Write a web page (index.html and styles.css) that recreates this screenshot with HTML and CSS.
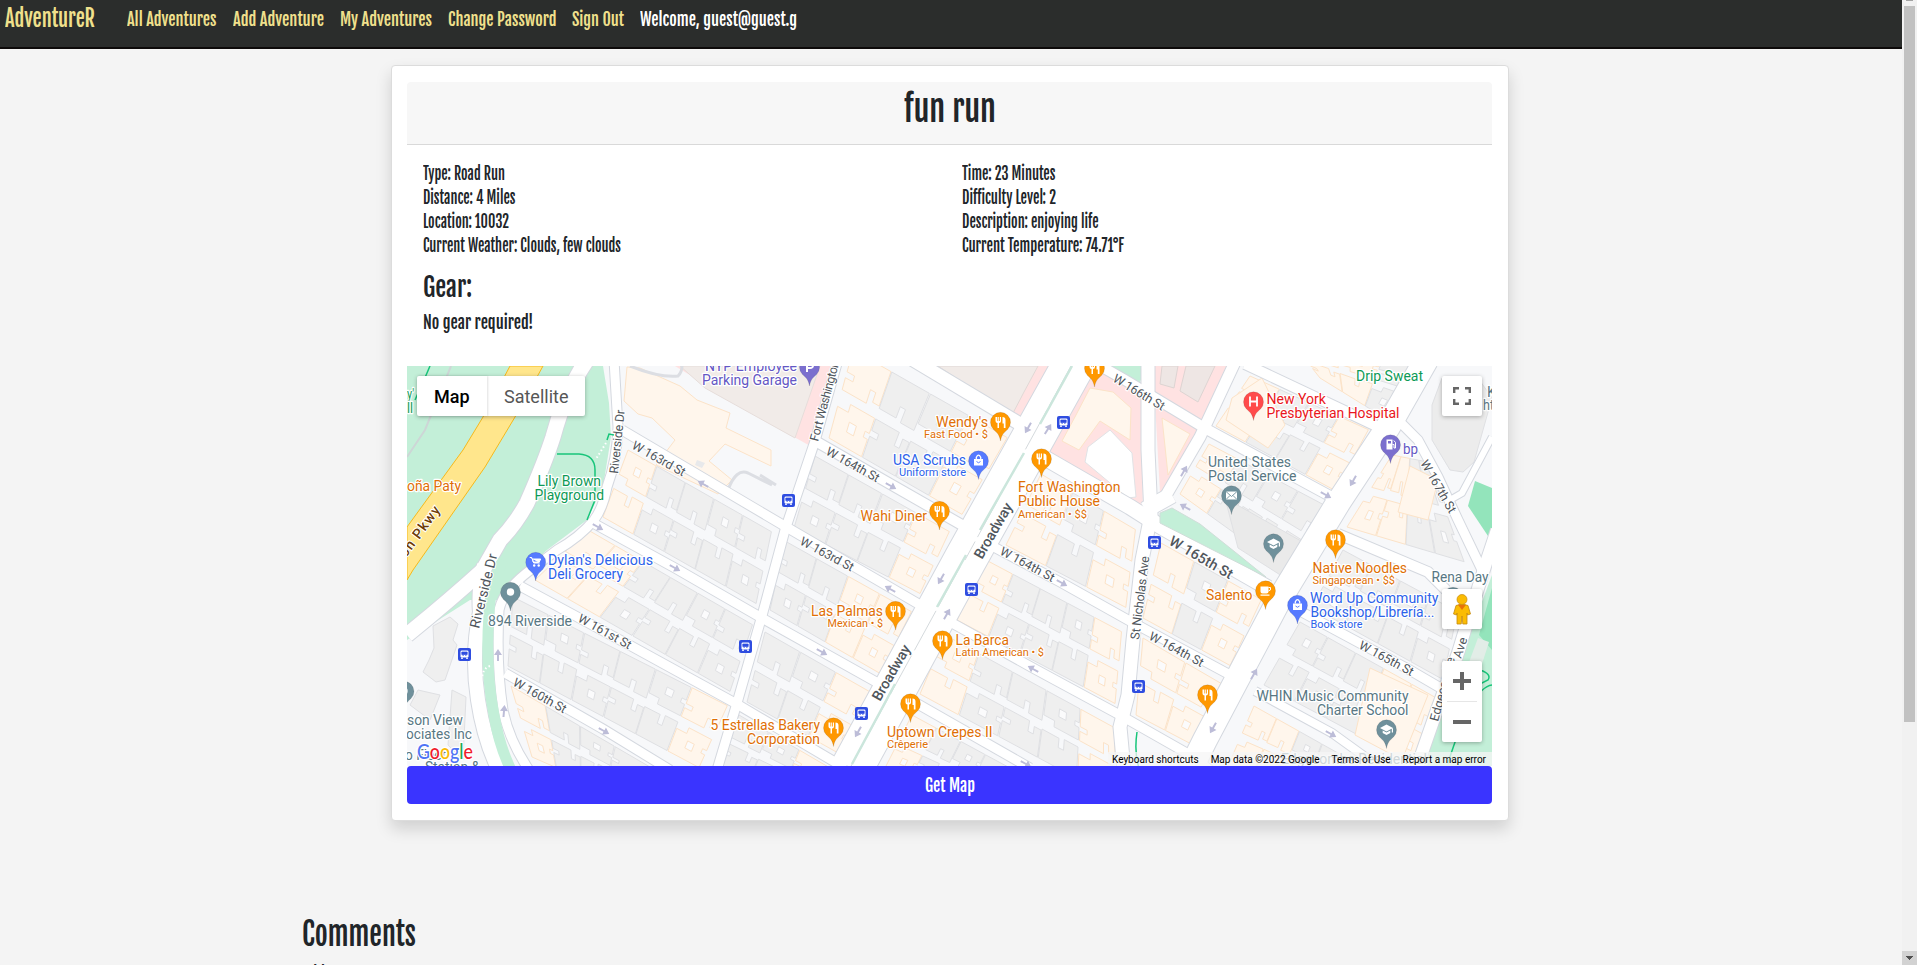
FILE: index.html
```html
<!DOCTYPE html>
<html lang="en">
<head>
<meta charset="utf-8">
<title>AdventureR</title>
<link rel="stylesheet" href="styles.css">
</head>
<body>
<div class="page">
  <nav class="navbar">
    <a class="brand fit" data-w="90">AdventureR</a>
    <div class="links">
      <a class="fit" data-w="89.500">All Adventures</a>
      <a class="fit" data-w="91">Add Adventure</a>
      <a class="fit" data-w="92">My Adventures</a>
      <a class="fit" data-w="108.500">Change Password</a>
      <a class="fit" data-w="52">Sign Out</a>
      <span class="fit welcome" data-w="157">Welcome, guest@guest.g</span>
    </div>
  </nav>
  <main>
    <section class="card">
      <header class="card-header"><h2 class="fit" data-w="92">fun run</h2></header>
      <div class="details">
        <div class="column">
          <p><span class="fit" data-w="82">Type: Road Run</span></p>
          <p><span class="fit" data-w="92.500">Distance: 4 Miles</span></p>
          <p><span class="fit" data-w="86">Location: 10032</span></p>
          <p><span class="fit" data-w="198">Current Weather: Clouds, few clouds</span></p>
        </div>
        <div class="column">
          <p><span class="fit" data-w="93.500">Time: 23 Minutes</span></p>
          <p><span class="fit" data-w="94">Difficulty Level: 2</span></p>
          <p><span class="fit" data-w="136.500">Description: enjoying life</span></p>
          <p><span class="fit" data-w="162">Current Temperature: 74.71°F</span></p>
        </div>
      </div>
      <div class="gear">
        <h3><span class="fit" data-w="49">Gear:</span></h3>
        <p><span class="fit" data-w="110.500">No gear required!</span></p>
      </div>
      <div class="map">
        <svg class="canvas" id="map" viewBox="407 366 1085 400" width="1085" height="400"></svg>
        <div class="map-type"><b>Map</b><span>Satellite</span></div>
        <div class="control fullscreen">
          <svg width="18" height="18" viewBox="0 0 18 18"><path d="M0 6V0h6v2.400H2.400V6zM12 0h6v6h-2.400V2.400H12zM0 12h2.400v3.600H6V18H0zM15.600 12H18v6h-6v-2.400h3.600z" fill="#666"/></svg>
        </div>
        <div class="control pegman">
          <svg width="18" height="31" viewBox="0 0 18 31"><path d="M3 11.500Q9 8.500 15 11.500L17.500 20l-3 1-.5-2V30H9.800L9 22l-.8 8H4V19l-.5 2-3-1z" fill="#fbbc04" stroke="#c58a10" stroke-width=".8"/><path d="M5 10.800h8L9 16z" fill="#e8710a"/><circle cx="9" cy="5.500" r="5" fill="#fbbc04" stroke="#c58a10" stroke-width=".7"/></svg>
        </div>
        <div class="zoom">
          <svg width="40" height="40" viewBox="0 0 40 40"><path d="M18 11h4v7h7v4h-7v7h-4v-7h-7v-4h7z" fill="#666"/></svg>
          <hr>
          <svg width="40" height="40" viewBox="0 0 40 40"><path d="M11 18h18v4H11z" fill="#666"/></svg>
        </div>
        <div class="attribution"><span>Keyboard shortcuts</span><span>Map data ©2022 Google</span><span>Terms of Use</span><span>Report a map error</span></div>
      </div>
      <button class="get-map"><span class="fit" data-w="50">Get Map</span></button>
    </section>
    <section class="comments">
      <h2><span class="fit" data-w="114">Comments</span></h2>
      <p><span class="fit" data-w="95">Add a comment</span></p>
    </section>
  </main>
  <div class="scrollbar"><i class="up"></i><i class="thumb"></i><i class="down"><svg width="7" height="4" viewBox="0 0 7 4"><path d="M0 0h7v1H6v1H5v1H4v1H3V3H2V2H1V1H0z" fill="#505050"/></svg></i></div>
</div>
<script src="script.js"></script>
</body>
</html>
```
FILE: styles.css
```css
* { box-sizing: border-box; }
body { margin: 0; overflow: hidden; background: #f4f4f4; color: #212529; font-family: "Fjalla One", Roboto, sans-serif; font-weight: 500; }
h2, h3, p { margin: 0; font-weight: 500; }
.page { position: relative; height: 965px; overflow: hidden; padding-right: 15px; }
.fit { display: inline-block; white-space: nowrap; }
.fit > span { display: inline-block; transform-origin: 0 50%; }
.navbar { display: flex; height: 49px; padding-left: 5px; background: #2b2d2c; border-bottom: 2px solid #0d0a0a; color: #f0e08c; }
.brand { font-size: 24px; line-height: 36px; margin-right: 32px; }
.links { display: flex; gap: 16px; font-size: 18px; line-height: 39px; }
.welcome { color: #fff; }
.card { width: 1118px; height: 756px; margin: 16px 0 0 390.500px; padding: 16px 15.500px; background: #fff; border: 1px solid #dcdcdc; border-radius: 4px; box-shadow: 0 8px 16px rgba(0,0,0,.15); }
.card-header { height: 63px; text-align: center; background: #f7f7f7; border-bottom: 1px solid #d9d9d9; border-radius: 4px 4px 0 0; font-size: 36px; line-height: 54px; }
.card-header h2 { font-size: 34.500px; text-align: left; }
.details { display: grid; grid-template-columns: 538.500px 1fr; padding: 17px 0 0 16px; font-size: 17px; line-height: 24px; }
.column p { height: 24px; }
.gear { padding: 14px 0 32px 16px; }
.gear h3 { height: 30px; font-size: 26px; line-height: 30px; margin-bottom: 8px; }
.gear p { height: 24px; font-size: 18px; line-height: 24px; }
.map { position: relative; height: 400px; width: 1085px; overflow: hidden; font-family: Roboto, sans-serif; font-weight: 400; }
.canvas { display: block; }
.map-type { position: absolute; left: 10px; top: 10px; display: flex; height: 40px; background: #fff; border-radius: 2px; box-shadow: 0 1px 4px rgba(0,0,0,.3); font-size: 18px; line-height: 41px; color: #565656; }
.map-type b { width: 70px; padding-left: 17px; font-weight: 500; color: #000; box-shadow: 1px 0 2px rgba(0,0,0,.12); }
.map-type span { width: 98px; padding-left: 17px; }
.control, .zoom { position: absolute; right: 10px; width: 40px; background: #fff; border-radius: 2px; box-shadow: 0 1px 4px rgba(0,0,0,.3); }
.control { height: 40px; display: grid; place-items: center; }
.fullscreen { top: 10px; }
.pegman { top: 223px; }
.zoom { top: 295px; height: 81px; }
.zoom svg { display: block; }
.zoom hr { height: 1px; margin: 0 5px; border: 0; background: #e6e6e6; }
.attribution { position: absolute; right: 0; bottom: 0; display: flex; justify-content: space-between; width: 384px; height: 14px; padding: 0 6px 0 4px; background: rgba(245,245,245,.75); color: #000; font-size: 10px; line-height: 15px; }
.get-map { display: block; width: 1085px; height: 38px; padding: 0; border: 0; border-radius: 4px; background: #3a34ff; color: #fff; font: 500 18px/36px "Fjalla One", Roboto, sans-serif; }
.get-map .fit { text-align: left; }
.comments { padding: 94px 0 0 301.500px; }
.comments h2 { height: 38px; font-size: 31.500px; line-height: 38px; margin-bottom: 8px; }
.comments p { font-size: 18px; line-height: 24px; }
.scrollbar { position: absolute; right: 0; top: 0; width: 15px; height: 965px; background: #f1f1f1; }
.up { position: absolute; left: 4px; top: 0; width: 7px; height: 1px; background: #a3a3a3; }
.thumb { position: absolute; left: 2px; top: 6px; width: 11px; height: 716px; background: #c1c1c1; }
.down { position: absolute; left: 0; bottom: 0; width: 15px; height: 14px; display: grid; place-items: center; background: #d2d2d2; }
.label { paint-order: stroke; stroke: #fff; stroke-width: 2.500px; stroke-linejoin: round; font-size: 14px; }
.label.small { font-size: 11.500px; }
.street { paint-order: stroke; stroke: #fff; stroke-width: 2px; font-size: 12.500px; fill: #50565c; }
.street.major { font-size: 14.500px; font-weight: 500; }
.street.drive { font-size: 14px; }
.street.parkway { font-size: 14px; font-weight: 500; fill: #6d3b05; }
.logo { font: 500 21px Lato, sans-serif; paint-order: stroke; stroke: #fff; stroke-width: 2.500px; }
```
FILE: script.js
```js
// Squeeze headings and body text to the condensed widths of the site's type.
document.querySelectorAll('.fit').forEach(function (el) {
  var inner = document.createElement('span');
  inner.textContent = el.textContent;
  el.textContent = '';
  el.appendChild(inner);
  var w = +el.dataset.w, n = inner.getBoundingClientRect().width;
  el.style.width = w + 'px';
  inner.style.transform = 'scaleX(' + (w / n) + ')';
});

var out = [];
function poly(points, fill, stroke) {
  out.push('<polygon points="' + points + '" fill="' + fill + '"' + (stroke ? ' stroke="' + stroke + '"' : '') + '/>');
}

// Ground
out.push('<rect x="407" y="366" width="1085" height="400" fill="#f7f8fa"/>');
var park = '#c3efd8', pink = '#ffe2e2', cream = '#fff6ec', creamLine = '#fce3c8', grey = '#efefef', greyLine = '#dfe0e3';
poly('407,366 603,366 609,403 611,437 603,487 587,520 547,550 520,575 500,600 470,600 407,640', park);
poly('675,366 838,366 812,447 760,418', pink);
poly('697,366 818,366 793,436 740,405', '#f1ebe8', '#e6ddda');
poly('680,366 820,366 795,438 705,388', '#f1ebe8', '#e6ddda');
poly('930,366 1052,366 1019,425 1000,412', pink);
poly('938,366 1038,366 1024,392 1012,415', '#f1ebe8', '#e0d8d5');
poly('1087,378 1105,372 1141,393 1143,513 1055,462 1045,450', pink);
poly('1090,388 1113,392 1131,408 1130,440 1100,421 1079,450 1062,441 1076,415', cream, creamLine);
poly('1110,430 1132,453 1136,497 1128,498 1085,462 1088,447', '#ffffff', '#e1e3e6');
poly('1154,366 1232,366 1206,423 1154,393', pink);
poly('1162,366 1178,366 1174,388 1160,384', '#eee6e4', '#ddd4d2');
poly('1186,366 1215,366 1198,402 1180,391', '#eee6e4', '#ddd4d2');
poly('1155,403 1202,430 1178,482 1160,493', pink);
poly('1162,418 1190,434 1168,475', cream, creamLine);
poly('1108,366 1145,366 1139,386 1126,380', park);
poly('1475,481 1492,488 1492,542 1468,506', '#93e4bb');
poly('1492,575 1462,655 1440,720 1423,766 1492,766', park);
poly('1492,588 1479,635 1492,650', '#93e4bb');
poly('1478,638 1489,642 1480,670 1468,665', '#e2ede7');
out.push('<path d="M627 367l13 1 40 18 17 14 33 13-4 15 45 22v16l-46-22-16 17 23 19-14 14-62-29 19-25-23-22-14-4-14-13z" fill="' + cream + '" stroke="' + creamLine + '"/>');
poly('697,460 705,463 702,468 695,465', '#e8e9eb');
out.push('<path d="M630 366q30 12 48 10q4-4 4-10M728 490q8-22 20-17l24 12M760 475l16 10" fill="none" stroke="#dcdee3" stroke-width="3"/>');
poly('433,626 450,617 458,624 453,640 457,645 445,680 436,682 423,672 429,660 434,648', grey, greyLine);
poly('418,690 440,695 430,720 410,705', grey, greyLine);
poly('452,690 466,697 463,760 448,745', grey, greyLine);

// A city block: a quad split into two rows of notched buildings.
// colours: one letter per column, c = commercial, g = residential.
function block(q, colours) {
  function at(u, v) {
    var x = (1 - u) * (1 - v) * q[0] + u * (1 - v) * q[2] + u * v * q[4] + (1 - u) * v * q[6];
    var y = (1 - u) * (1 - v) * q[1] + u * (1 - v) * q[3] + u * v * q[5] + (1 - u) * v * q[7];
    return x.toFixed(1) + ',' + y.toFixed(1);
  }
  var shapes = [
    [[0, 0], [.97, 0], [.97, 1], [.6, 1], [.6, .65], [.46, .65], [.46, .95], [0, .95]],
    [[0, 0], [.98, 0], [.98, .9], [.8, .9], [.8, .65], [.66, .65], [.66, 1], [0, 1], [0, .7], [.2, .7], [.2, .55], [0, .55]],
    [[0, 0], [.97, 0], [.97, .45], [.85, .45], [.85, .6], [.97, .6], [.97, 1], [.3, 1], [.3, .8], [0, .8]]
  ];
  var n = colours.length;
  for (var i = 0; i < n; i++) for (var r = 0; r < 2; r++) {
    var k = (i * 2 + r + n) % 3, c = colours[i] === 'c';
    var put = function (p) {
      var v = r ? 1 - p[1] * .45 : p[1] * .45;
      return at((i + p[0]) / n, v);
    };
    poly(shapes[k].map(put).join(' '), c ? cream : grey, c ? creamLine : greyLine);
    if (k === 2) poly([[.4, .35], [.6, .35], [.6, .6], [.4, .6]].map(put).join(' '), '#fbfbfc', c ? creamLine : greyLine);
  }
}
block([628,450,772,532,757,604,603,517], 'cgggg');
block([588,530,753,625,731,692,535,580], 'ccgggg');
block([513,597,728,706,700,768,508,666], 'gggggc');
block([511,686,650,767,630,800,532,757], 'cggg');
block([815,456,950,532,921,594,794,528], 'gggc');
block([785,541,912,612,881,674,770,610], 'ggcc');
block([765,632,872,693,840,754,747,702], 'ggc');
block([739,715,830,768,815,805,718,766], 'ggc');
block([853,350,1008,438,963,515,829,438], 'cggc');
block([1041,474,1136,530,1127,608,1006,545], 'cgc');
block([986,560,1122,632,1116,704,957,620], 'cgggc');
block([945,635,1115,728,1117,800,920,694], 'cgggc');
block([912,715,1010,768,990,810,885,768], 'cggg');
block([1161,543,1262,600,1231,666,1143,618], 'cgc');
block([1143,638,1229,688,1195,746,1136,715], 'cc');
block([1209,444,1328,507,1290,573,1180,494], 'cggg');
block([1250,376,1369,430,1336,491,1216,426], 'cggc');
block([1290,340,1430,366,1388,420,1320,378], 'ccg');
block([1392,455,1428,462,1465,562,1347,527], 'ccgg');
block([1343,550,1458,612,1444,680,1312,607], 'gggg');
block([1300,622,1440,700,1420,768,1264,685], 'gggcc');
block([1254,706,1345,757,1330,800,1228,766], 'ccgg');
poly('1232,398 1262,378 1285,425 1268,448 1226,420', cream, creamLine);
poly('1432,405 1442,378 1478,378 1492,398 1474,462 1463,472 1450,470 1432,440', '#ececec', greyLine);
poly('1370,668 1428,695 1402,760 1355,735', cream, creamLine);
poly('1225,498 1308,545 1285,578 1238,548', '#eaeaea', greyLine);
poly('1410,466 1438,480 1428,520 1398,512', cream, creamLine);

// Streets: [path, width]; every casing is laid before the first fill.
var streets = [
  ['M622 430L788 528L922 606', 9], ['M952 623L1033 668L1118 714L1192 756L1210 770', 9],
  ['M593 523L675 568L760 617L878 683', 9], ['M916 703L1030 768', 9],
  ['M520 586L633 647L735 703L845 768', 9], ['M505 673L603 729L670 770', 9],
  ['M817 442L892 485L962 525', 10], ['M990 545L1062 583L1128 620L1234 677', 9],
  ['M900 352L1020 424', 13], ['M1045 458L1130 507L1160 526L1268 588', 15],
  ['M1300 611L1408 669L1444 690', 9], ['M1255 691L1332 733L1375 764', 8],
  ['M1090 360L1125 380L1208 430L1330 496', 10], ['M1338 534L1428 572L1446 590', 10],
  ['M1245 364L1385 430', 10], ['M1398 420L1418 440L1438 477L1458 520L1483 572', 9],
  ['M1492 437L1462 493L1450 500', 6], ['M1497 530L1487 560L1468 620L1458 653L1438 707L1416 770', 12],
  ['M838 360L815 441L785 530L763 612L737 703L717 770', 9],
  ['M1148 360L1148 450L1151 515L1142 560L1133 640L1128 695L1120 727L1124 770', 13],
  ['M1236 360L1200 437L1165 497', 11], ['M1145 510L1172 495', 16],
  ['M614 360L618 427Q617 460 607 487Q603 508 594 520Q580 537 557 550L533 568Q503 590 499 610Q496 665 503 710Q509 740 529 770', 9],
  ['M587 360Q565 392 553 437Q545 462 527 503Q515 525 500 540L483 570Q450 600 407 635', 15],
  ['M484 565Q478 590 480 612Q471 655 478 700Q484 740 499 770', 14],
  ['M1426 360L1388 427L1338 503L1278 602L1242 670L1205 740L1190 770', 24],
  ['M1079 355L965 560L852 768', 42]
];
streets.forEach(function (s) { out.push('<path d="' + s[0] + '" fill="none" stroke="#d4d8df" stroke-width="' + (s[1] + 2) + '"/>'); });
streets.forEach(function (s) { out.push('<path d="' + s[0] + '" fill="none" stroke="#fff" stroke-width="' + s[1] + '"/>'); });
out.push('<path d="M503 560Q489 590 489 615Q485 670 494 715Q499 745 511 770" fill="none" stroke="' + park + '" stroke-width="11"/>');
poly('1160,513 1172,508 1200,524 1240,556 1266,577 1160,523', park, '#d0ddd9');
out.push('<path d="M1071 366L965 560M960 567L850 768" fill="none" stroke="#d5dadd" stroke-dasharray="45 5"/><path d="M1072 366L1040 424M1024 453L980 530M966 555L937 607M895 684L852 764" fill="none" stroke="#cbe6dc" stroke-width="2.500"/>');
poly('510,366 543,366 515,417 485,467 413,570 407,580 407,527 463,450 483,417', '#ffe68c', '#f6b91c');
out.push('<path d="M430 366L424 380L415 400M557 454h22q16 1 16 16v30l-8 20M607 440l2-6 5 1M1137 732q-3 20 2 36M1480 670q12 4 8 10l-8 4M1492 685q-20 2-44 78" fill="none" stroke="#18c57a" stroke-width="1.500"/><path d="M451 366L425 430L407 457" fill="none" stroke="#cdd6d6" stroke-width="2"/><path d="M606 443l-10 16M490 666q-7 2-8 12" stroke="#fff" stroke-width="2" stroke-dasharray="1.500 2.500" fill="none"/>');

// One-way arrows: x, y, angle
[[703,484,209],[598,527,29],[675,568,29],[498,655,-90],[504,711,-85],[604,731,29],[891,486,29],[1028,428,120],[1048,429,-58],[941,579,120],[890,589,209],[947,614,-60],[1062,583,29],[822,652,29],[1033,669,209],[858,732,120],[1026,764,29],[1184,471,-60],[1185,507,209],[1353,481,120],[1326,495,29],[1254,674,-60],[1213,728,120],[1331,734,29]].forEach(function (a) {
  out.push('<path transform="translate(' + a[0] + ' ' + a[1] + ') rotate(' + a[2] + ')" d="M-6-1H0V-4L6 0 0 4V1H-6z" fill="#bdbdd8"/>');
});

// Street names: text, x, y, angle, length, style
[['W 163rd St',631,448,29,59],['W 161st St',577,621,29,59],['W 160th St',512,685,29,59],['W 164th St',825,454,29,59],['W 163rd St',799,544,28,59],['W 164th St',999,554,28,60],['W 166th St',1112,381,31,58],['W 165th St',1168,544,30,71,'major'],['W 164th St',1148,639,28,60],['W 165th St',1358,648,28,60],['W 167th St',1420,463,60,59],['Riverside Dr',618,474,-84,64],['Riverside Dr',479,629,-76,76,'drive'],['Fort Washington Ave',818,442,-75,104],['Broadway',982,560,-60,62,'major'],['Broadway',880,702,-60,62,'major'],['St Nicholas Ave',1139,640,-83,84],['Ave',1461,659,-72,21],['Edgecombe',1438,722,-75,66],['on Pkwy',406,558,-54,59,'parkway']].forEach(function (s) {
  out.push('<text class="street ' + (s[5] || '') + '" transform="translate(' + s[1] + ' ' + s[2] + ') rotate(' + s[3] + ')" textLength="' + s[4] + '">' + s[0] + '</text>');
});

// Bus stops
[[464.500,654.500],[745.500,646.500],[788.500,500.500],[1063.500,422.500],[971.500,589.500],[861.500,713.500],[1154.500,542.500],[1138.500,686.500]].forEach(function (b) {
  out.push('<g transform="translate(' + b[0] + ' ' + b[1] + ')"><rect x="-6.500" y="-6.500" width="13" height="13" rx="2" fill="#2f4de0"/><rect x="-4" y="-4" width="8" height="7" rx="1.300" fill="#fff"/><path d="M-2.700-2.500h5.400V0h-5.400zM-2 1h1.300M.7 1H2" fill="#2f4de0" stroke="#2f4de0" stroke-width=".7"/><path d="M-3.300 3h1.600v1.500h-1.600zM1.700 3h1.600v1.500H1.700z" fill="#fff"/></g>');
});

// Pins: kind, x, y
var glyph = {
  food: '<path d="M-5-5v4q0 2 2 2v5h1.500V1q2 0 2-2v-4h-1v4h-.8v-4h-1v4h-.8v-4zM2-5q3 0 3 3V6H3.300V1.500H2z" fill="#fff"/>',
  bag: '<path d="M-4.500-1.500h9v6.500h-9z" fill="#fff"/><path d="M-2.200-1.500v-1.800q2.200-4 4.400 0v1.800" fill="none" stroke="#fff" stroke-width="1.300"/><path d="M-2 1q2 2.500 4 0" fill="none" stroke="#567aff"/>',
  cart: '<path d="M-6-4.500h2L-2 1h6M-3.300-3H5L3.500 0h-6z" fill="#fff" stroke="#fff"/><circle cx="-1.500" cy="3.500" r="1.200" fill="#fff"/><circle cx="3" cy="3.500" r="1.200" fill="#fff"/>',
  dot: '<circle r="3.700" fill="#fff"/>',
  park: '<path d="M-2.500 5V-4.500H.5q3 0 3 2.800T.5 1H-2.500" fill="none" stroke="#fff" stroke-width="2"/>',
  hosp: '<path d="M-3.500-5V5M3.500-5V5M-3.500 0h7" stroke="#fff" stroke-width="1.800"/>',
  gas: '<path d="M-4-5h6V5h-6z" fill="#fff"/><path d="M-2.500-3.500h3v2.500h-3z" fill="#7b6fce"/><path d="M2 0h1.500v3.500H5V-2L3.300-4" fill="none" stroke="#fff"/>',
  mail: '<path d="M-5.500-4h11v8h-11z" fill="#fff"/><path d="M-5.500-4L0 1l5.500-5M-5.500 4l4-4M5.500 4l-4-4" fill="none" stroke="#6f909b" stroke-width=".9"/>',
  school: '<path d="M-6.500-1.500L0-5l6.500 3.500L0 2zM-3.800 1L0 3 3.800 1v2.500L0 5.500-3.800 3.500zM5.300-1h1.200v4H5.300z" fill="#fff"/>',
  cup: '<path d="M-5-4h8v5q0 2-2 2h-4q-2 0-2-2zM-5 4h9v1.300h-9z" fill="#fff"/><path d="M3-3h2q1 3-2 3.500" fill="none" stroke="#fff"/>'
};
var tint = { food: '#ff9800', cup: '#ff9800', bag: '#567aff', cart: '#567aff', dot: '#6f909b', mail: '#6f909b', school: '#6f909b', park: '#7b6fce', gas: '#7b6fce', hosp: '#ff4b4b' };
[['cart',535.7,562],['dot',510.5,592],['dot',404,691],['park',809.5,367],['food',1094.5,368],['food',1000.5,422],['bag',978.5,460.5],['food',1041.5,458.5],['food',939.5,511],['food',895.5,611],['food',942.5,640.5],['food',910.5,703.5],['food',833.5,727.5],['hosp',1253.5,401.5],['gas',1390.5,444.5],['mail',1231.5,495.5],['school',1273.5,543.5],['food',1335.5,539.5],['cup',1265.5,590.5],['bag',1297.5,605],['food',1207.5,694.5],['school',1386.5,729.5],['dot',1453,597]].forEach(function (p) {
  out.push('<g transform="translate(' + p[1] + ' ' + p[2] + ')"><path d="M0 19C-1 13-3 11-7 7.500A10 10 0 1 1 7 7.500C3 11 1 13 0 19z" fill="' + tint[p[0]] + '" stroke="#333" stroke-opacity=".25" stroke-width=".5"/>' + glyph[p[0]] + '</g>');
});

// Place names: text, left, right, baseline, colour, small
var o = '#e06f05', b = '#2c62ea', s = '#587783', g = '#0d9a56', p = '#6457c4', r = '#ea1620';
[['Lily Brown',537.5,601,486,g],['Playground',534.5,604,500,g],['oña Paty',407,461,491,o],['y\'',407,414,399,g],['ll',407,413,413,g],
['Dylan\'s Delicious',548,653,565,b],['Deli Grocery',548,623,579,b],['894 Riverside',488,572,626,s],['son View',407,463,725,s],['ociates Inc',406,472,739,s],['o Fleet',405,446,760,s],['Station &amp;',425,480,772,s],
['5 Estrellas Bakery',710.5,820,730,o],['Corporation',747,820,744,o],['NYP Employee',705,797,371,p],['Parking Garage',702,797,384.5,p],
['Wendy\'s',936,988,427,o],['Fast Food • $',924,988,438,o,1],['USA Scrubs',893,966,465,b],['Uniform store',899,966,476,b,1],['Wahi Diner',860.5,927,521,o],
['Fort Washington',1018,1120.5,492,o],['Public House',1018,1100,506,o],['American • $$',1018,1087,518,o,1],['Las Palmas',811,883,616,o],['Mexican • $',827.5,883,627,o,1],
['La Barca',955.5,1009,645,o],['Latin American • $',955.5,1044,656,o,1],['Uptown Crepes II',887,992.5,737,o],['Crêperie',887,928,748,o,1],['Drip Sweat',1356,1423,381,g],
['New York',1266.5,1326,404,r],['Presbyterian Hospital',1266.5,1399.5,418,r],['bp',1403,1418,454,p],['United States',1208,1291,467,s],['Postal Service',1208,1296.5,481,s],
['Native Noodles',1312.5,1407,573,o],['Singaporean • $$',1312.5,1395,584,o,1],['Salento',1206,1252.5,600,o],['Word Up Community',1310,1438.5,603,b],['Bookshop/Librería...',1310.5,1434.5,617,b],['Book store',1310.5,1362.5,628,b,1],
['Rena Day',1431.5,1488.5,582,s],['WHIN Music Community',1256.5,1408.5,701,s],['Charter School',1317,1408.5,715,s],['K',1487,1496,397,s],['ht',1483,1494,410,s],['Edgecombe Residential',1281,1427,764,s]].forEach(function (t) {
  out.push('<text class="label' + (t[5] ? ' small' : '') + '" x="' + t[1] + '" y="' + t[3] + '" textLength="' + (t[2] - t[1]) + '" lengthAdjust="spacingAndGlyphs" fill="' + t[4] + '">' + t[0] + '</text>');
});
out.push('<text class="logo" x="417" y="759" textLength="56" lengthAdjust="spacingAndGlyphs"><tspan fill="#4f74f5">G</tspan><tspan fill="#f01c2c">o</tspan><tspan fill="#f9bb05">o</tspan><tspan fill="#4f74f5">g</tspan><tspan fill="#1fa854">l</tspan><tspan fill="#f01c2c">e</tspan></text>');
document.getElementById('map').innerHTML = out.join('');
```
